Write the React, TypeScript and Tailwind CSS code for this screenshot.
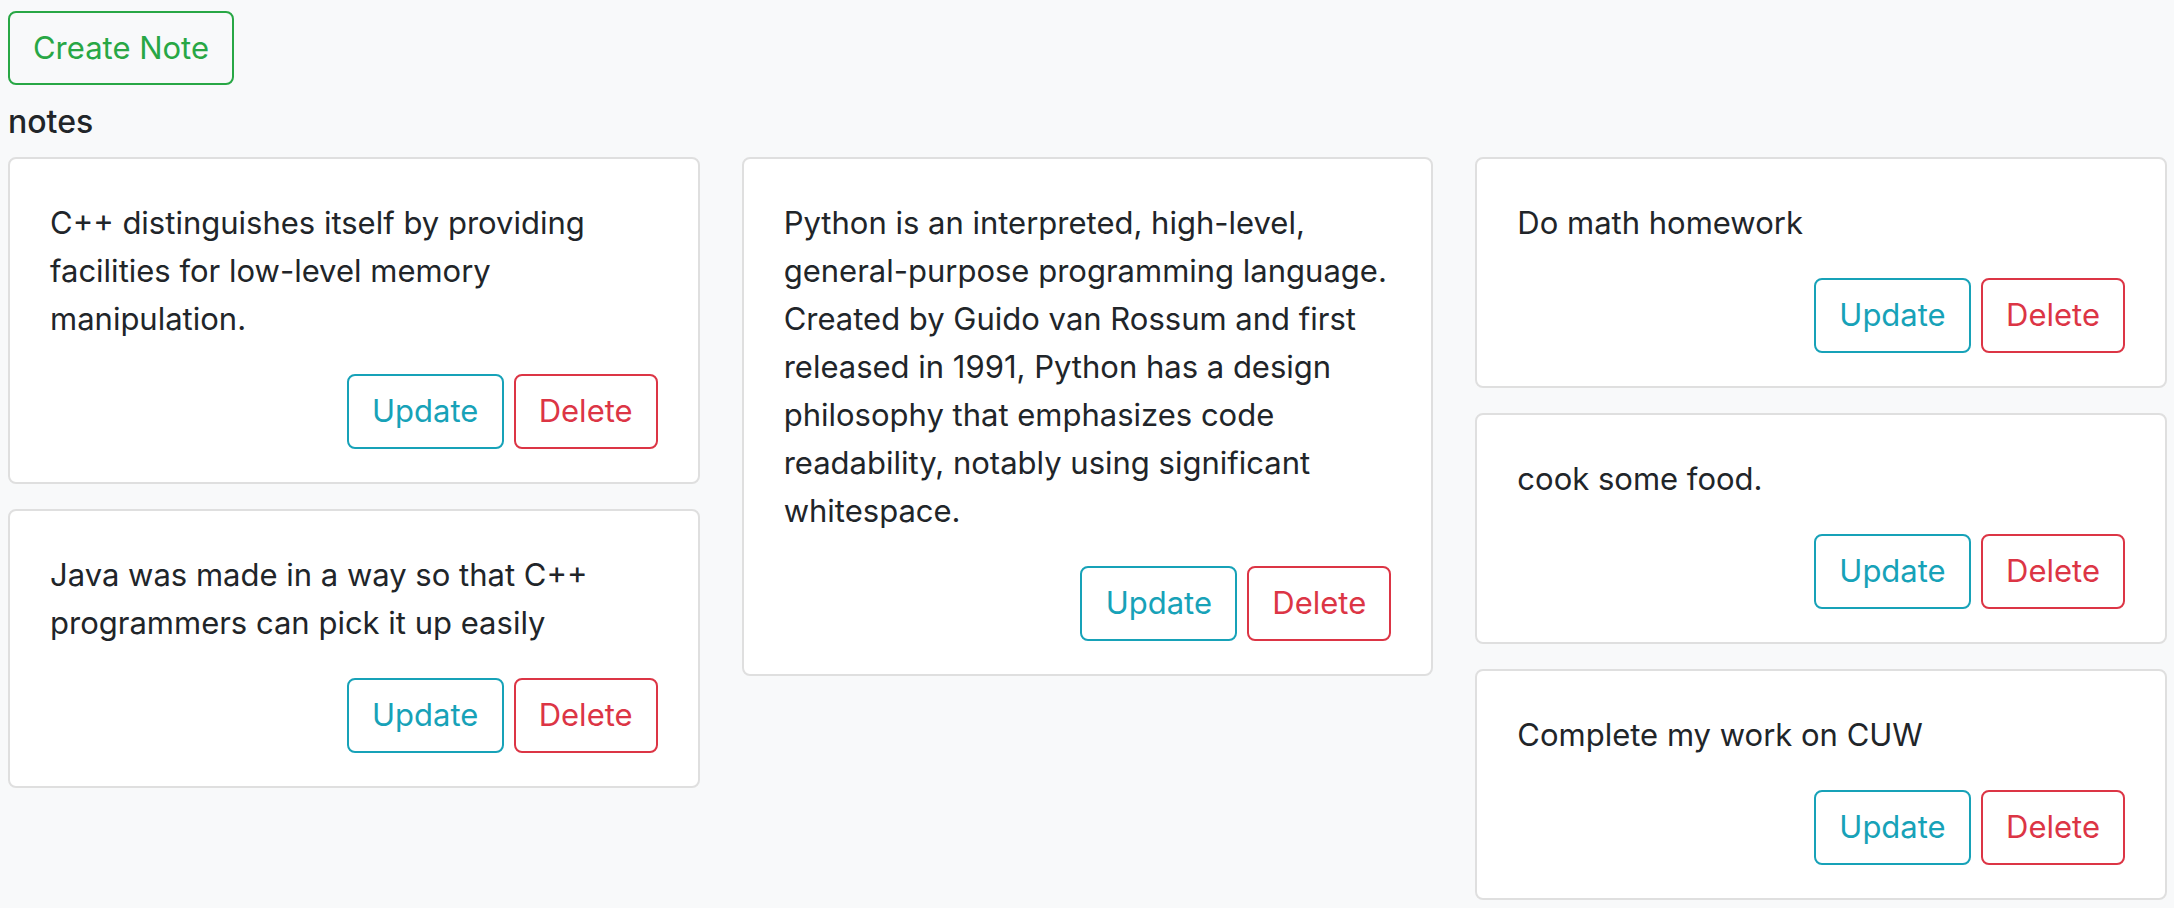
import React from 'react';

type Note = { id: number; text: string };

const columns: Note[][] = [
  [
    { id: 1, text: 'C++ distinguishes itself by providing facilities for low-level memory manipulation.' },
    { id: 2, text: 'Java was made in a way so that C++ programmers can pick it up easily' },
  ],
  [
    {
      id: 3,
      text: 'Python is an interpreted, high-level, general-purpose programming language. Created by Guido van Rossum and first released in 1991, Python has a design philosophy that emphasizes code readability, notably using significant whitespace.',
    },
  ],
  [
    { id: 4, text: 'Do math homework' },
    { id: 5, text: 'cook some food.' },
    { id: 6, text: 'Complete my work on CUW' },
  ],
];

function NoteCard({ note }: { note: Note }) {
  return (
    <div className="bg-white border-2 border-[#dfdfdf] rounded-[8px] pt-[40px] pb-[33px] px-[40px]">
      <p className="text-[31px] leading-[48px] text-[#212529] mb-[31px]">{note.text}</p>
      <div className="flex justify-end gap-[10px]">
        <button className="w-[157px] h-[75px] border-2 border-[#17a2b8] rounded-[8px] text-[31px] text-[#17a2b8] bg-transparent">
          Update
        </button>
        <button className="w-[144px] h-[75px] border-2 border-[#dc3545] rounded-[8px] text-[31px] text-[#dc3545] bg-transparent">
          Delete
        </button>
      </div>
    </div>
  );
}

export default function App() {
  return (
    <div
      className="min-h-screen bg-[#f8f9fa] pt-[11px] pl-[8px] pr-[7px]"
      style={{ fontFamily: 'Inter, "Liberation Sans", sans-serif' }}
    >
      <button className="w-[226px] h-[74px] border-2 border-[#28a745] rounded-[8px] text-[31px] text-[#28a745]">
        Create Note
      </button>
      <div className="mt-[18px] mb-[16px] text-[32px] leading-[38px] font-medium text-[#212529]">notes</div>
      <div className="grid grid-cols-3 gap-x-[42px] items-start">
        {columns.map((col, i) => (
          <div key={i} className="flex flex-col gap-[25px]">
            {col.map((n) => (
              <NoteCard key={n.id} note={n} />
            ))}
          </div>
        ))}
      </div>
    </div>
  );
}
